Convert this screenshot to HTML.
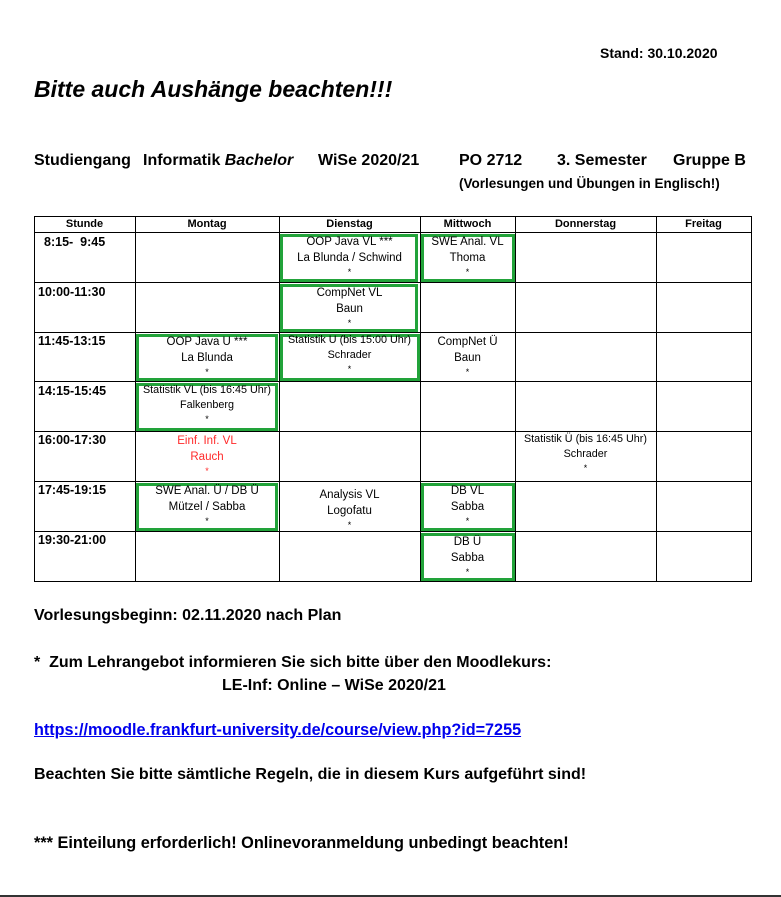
<!DOCTYPE html>
<html><head><meta charset="utf-8"><style>
body{margin:0;width:781px;height:897px;background:#fff;position:relative;font-family:"Liberation Sans",sans-serif;color:#000;overflow:hidden}
.a{position:absolute;white-space:nowrap}
.b{font-weight:bold}
.hl{position:absolute;background:#000;height:1px}
.vl{position:absolute;background:#000;width:1px}
.c{position:absolute;text-align:center;font-size:11.5px;line-height:16px;white-space:nowrap}
.c .s{font-size:9px;line-height:12px;display:block}
.g{position:absolute;border:3px solid #22a33a;box-sizing:border-box}
.t{position:absolute;left:38px;font-size:12.5px;font-weight:bold}
.h{position:absolute;top:217px;font-size:11px;font-weight:bold;text-align:center;line-height:15px}
</style></head><body>
<div class="a b" style="left:600px;top:45px;font-size:14px">Stand: 30.10.2020</div>
<div class="a b" style="left:34px;top:76px;font-size:23px;font-style:italic">Bitte auch Aushänge beachten!!!</div>
<div class="a b" style="left:34px;top:152px;font-size:16px">Studiengang</div>
<div class="a b" style="left:143px;top:152px;font-size:16px">Informatik <i>Bachelor</i></div>
<div class="a b" style="left:318px;top:152px;font-size:16px">WiSe 2020/21</div>
<div class="a b" style="left:459px;top:152px;font-size:16px">PO 2712</div>
<div class="a b" style="left:557px;top:152px;font-size:16px">3. Semester</div>
<div class="a b" style="left:673px;top:152px;font-size:16px">Gruppe B</div>
<div class="a b" style="left:459px;top:176px;font-size:13.5px">(Vorlesungen und Übungen in Englisch!)</div>

<div class="hl" style="left:34px;width:718px;top:216px"></div>
<div class="hl" style="left:34px;width:718px;top:232px"></div>
<div class="hl" style="left:34px;width:718px;top:282px"></div>
<div class="hl" style="left:34px;width:718px;top:332px"></div>
<div class="hl" style="left:34px;width:718px;top:381px"></div>
<div class="hl" style="left:34px;width:718px;top:431px"></div>
<div class="hl" style="left:34px;width:718px;top:481px"></div>
<div class="hl" style="left:34px;width:718px;top:531px"></div>
<div class="hl" style="left:34px;width:718px;top:581px"></div>
<div class="vl" style="top:216px;height:366px;left:34px"></div>
<div class="vl" style="top:216px;height:366px;left:135px"></div>
<div class="vl" style="top:216px;height:366px;left:279px"></div>
<div class="vl" style="top:216px;height:366px;left:420px"></div>
<div class="vl" style="top:216px;height:366px;left:515px"></div>
<div class="vl" style="top:216px;height:366px;left:656px"></div>
<div class="vl" style="top:216px;height:366px;left:751px"></div>

<div class="h" style="left:34px;width:101px">Stunde</div>
<div class="h" style="left:135px;width:144px">Montag</div>
<div class="h" style="left:279px;width:141px">Dienstag</div>
<div class="h" style="left:420px;width:95px">Mittwoch</div>
<div class="h" style="left:515px;width:141px">Donnerstag</div>
<div class="h" style="left:656px;width:95px">Freitag</div>

<div class="t" style="left:44px;top:235px">8:15-&nbsp; 9:45</div>
<div class="t" style="top:285px">10:00-11:30</div>
<div class="t" style="top:334px">11:45-13:15</div>
<div class="t" style="top:384px">14:15-15:45</div>
<div class="t" style="top:433px">16:00-17:30</div>
<div class="t" style="top:483px">17:45-19:15</div>
<div class="t" style="top:533px">19:30-21:00</div>

<div class="g" style="left:280px;top:234px;width:138px;height:48px"></div>
<div class="g" style="left:421px;top:234px;width:94px;height:48px"></div>
<div class="g" style="left:280px;top:284px;width:138px;height:48px"></div>
<div class="g" style="left:136px;top:334px;width:142px;height:47px"></div>
<div class="g" style="left:280px;top:334px;width:140px;height:47px"></div>
<div class="g" style="left:136px;top:383px;width:142px;height:48px"></div>
<div class="g" style="left:136px;top:483px;width:142px;height:48px"></div>
<div class="g" style="left:421px;top:483px;width:94px;height:48px"></div>
<div class="g" style="left:421px;top:533px;width:94px;height:48px"></div>

<div class="c" style="left:279px;width:141px;top:234px">OOP Java VL ***<br>La Blunda / Schwind<span class="s">*</span></div>
<div class="c" style="left:420px;width:95px;top:234px">SWE Anal. VL<br>Thoma<span class="s">*</span></div>
<div class="c" style="left:279px;width:141px;top:285px">CompNet VL<br>Baun<span class="s">*</span></div>
<div class="c" style="left:135px;width:144px;top:334px">OOP Java U ***<br>La Blunda<span class="s">*</span></div>
<div class="c" style="left:279px;width:141px;top:333px;line-height:15px;font-size:10.8px">Statistik U (bis 15:00 Uhr)<br>Schrader<span class="s">*</span></div>
<div class="c" style="left:420px;width:95px;top:334px">CompNet Ü<br>Baun<span class="s">*</span></div>
<div class="c" style="left:135px;width:144px;top:383px;line-height:15px;font-size:10.8px">Statistik VL (bis 16:45 Uhr)<br>Falkenberg<span class="s">*</span></div>
<div class="c" style="left:135px;width:144px;top:433px;color:#ff2a2a">Einf. Inf. VL<br>Rauch<span class="s">*</span></div>
<div class="c" style="left:515px;width:141px;top:432px;line-height:15px;font-size:10.8px">Statistik Ü (bis 16:45 Uhr)<br>Schrader<span class="s">*</span></div>
<div class="c" style="left:135px;width:144px;top:483px">SWE Anal. Ü / DB Ü<br>Mützel / Sabba<span class="s">*</span></div>
<div class="c" style="left:279px;width:141px;top:487px">Analysis VL<br>Logofatu<span class="s">*</span></div>
<div class="c" style="left:420px;width:95px;top:483px">DB VL<br>Sabba<span class="s">*</span></div>
<div class="c" style="left:420px;width:95px;top:534px">DB Ü<br>Sabba<span class="s">*</span></div>

<div class="a b" style="left:34px;top:607px;font-size:16px">Vorlesungsbeginn: 02.11.2020 nach Plan</div>
<div class="a b" style="left:34px;top:654px;font-size:16px">*&nbsp; Zum Lehrangebot informieren Sie sich bitte über den Moodlekurs:</div>
<div class="a b" style="left:222px;top:677px;font-size:16px">LE-Inf: Online – WiSe 2020/21</div>
<div class="a b" style="left:34px;top:721px;font-size:16.2px;color:#0000ee;text-decoration:underline">https://moodle.frankfurt-university.de/course/view.php?id=7255</div>
<div class="a b" style="left:34px;top:766px;font-size:16px">Beachten Sie bitte sämtliche Regeln, die in diesem Kurs aufgeführt sind!</div>
<div class="a b" style="left:34px;top:834px;font-size:16.3px">*** Einteilung erforderlich! Onlinevoranmeldung unbedingt beachten!</div>
<div class="hl" style="left:0;width:781px;top:895px;height:2px;background:#333"></div>
</body></html>
